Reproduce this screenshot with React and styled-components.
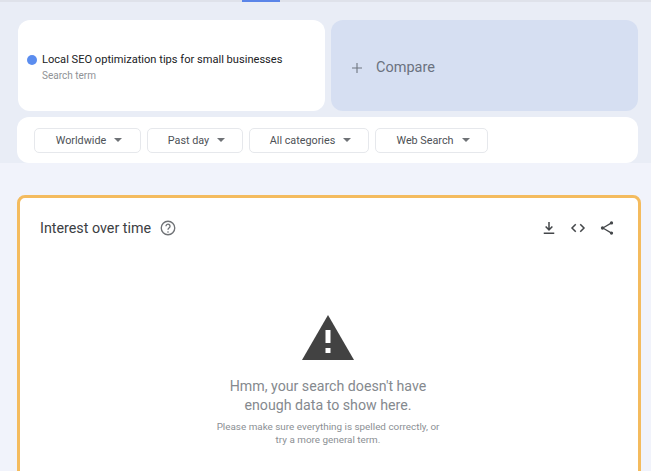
import React from 'react';
import styled, { createGlobalStyle } from 'styled-components';

const GlobalStyle = createGlobalStyle`
  html, body {
    margin: 0;
    padding: 0;
    height: 100%;
    overflow: hidden;
    background: #f1f3fb;
    font-family: Roboto, "Liberation Sans", sans-serif;
  }
`

const Page = styled.div`
  width: 651px;
  height: 471px;
  overflow: hidden;
`
const TopBar = styled.div`
  height: 2px;
  background: #dfe2ea;
  padding-left: 242px;
`
const ActiveTab = styled.div`
  width: 38px;
  height: 2px;
  background: #5b85e8;
`
const Header = styled.div`
  background: #e9edf6;
  height: 161px;
  padding: 18px 13px 0 17px;
  box-sizing: border-box;
  display: flex;
  flex-direction: column;
  gap: 6px;
`
const TermRow = styled.div`
  display: flex;
  gap: 6px;
  height: 91px;
`
const TermCard = styled.div`
  width: 307px;
  margin-left: 1px;
  background: #fff;
  border-radius: 12px;
  padding: 32px 0 0 9px;
  box-sizing: border-box;
`
const TermTitle = styled.div`
  display: flex;
  align-items: center;
  gap: 5px;
  font-size: 11.1px;
  line-height: 16px;
  color: #202124;
`
const Dot = styled.span`
  width: 10px;
  height: 10px;
  border-radius: 50%;
  background: #5b8def;
`
const TermSub = styled.div`
  margin: 1px 0 0 15px;
  font-size: 10px;
  line-height: 14px;
  color: #8f9296;
`
const CompareCard = styled.div`
  width: 307px;
  background: #d6dff2;
  border-radius: 12px;
  display: flex;
  align-items: center;
  padding: 4px 0 0 20px;
  box-sizing: border-box;
  gap: 13px;
  color: #6b7280;
  font-size: 14.5px;
`
const FilterBar = styled.div`
  background: #fff;
  border-radius: 12px;
  height: 46px;
  display: flex;
  align-items: center;
  gap: 6px;
  padding-left: 17px;
  box-sizing: border-box;
`
const Chip = styled.div`
  width: ${p => p.$width}px;
  height: 25px;
  box-sizing: border-box;
  border: 1px solid #e6e8ec;
  border-radius: 5px;
  padding-left: 3px;
  display: flex;
  align-items: center;
  justify-content: center;
  gap: 8px;
  font-size: 10.8px;
  color: #4d5156;
`
const Caret = styled.span`
  width: 0;
  height: 0;
  border-left: 4px solid transparent;
  border-right: 4px solid transparent;
  border-top: 4px solid #6f7276;
`
const Body = styled.div`
  padding: 32px 10px 0 17px;
`
const Card = styled.div`
  height: 320px;
  background: #fff;
  border: 3px solid #f4bb5e;
  border-radius: 8px;
  box-sizing: border-box;
  padding: 0 22px 0 20px;
`
const CardHead = styled.div`
  display: flex;
  align-items: center;
  height: 60px;
`
const CardTitle = styled.div`
  font-size: 14.3px;
  color: #3c4043;
`
const HelpIcon = styled.svg`
  width: 18px;
  height: 18px;
  margin-left: 8px;
`
const CardActions = styled.div`
  margin-left: auto;
  display: flex;
  align-items: center;
  gap: 11px;
`
const ActionIcon = styled.svg`
  width: 18px;
  height: 18px;
  display: block;
`
const EmptyState = styled.div`
  display: flex;
  flex-direction: column;
  align-items: center;
  padding-top: 57px;
`
const WarnIcon = styled.svg`
  width: 52px;
  height: 45px;
  display: block;
`
const EmptyTitle = styled.div`
  margin-top: 17px;
  width: 240px;
  text-align: center;
  font-size: 14.2px;
  line-height: 19px;
  color: #85898e;
`
const EmptyNote = styled.div`
  margin-top: 5px;
  width: 232px;
  text-align: center;
  font-size: 9.9px;
  line-height: 13px;
  color: #8b8f94;
`

const filters = [
  { label: 'Worldwide', width: 107 },
  { label: 'Past day', width: 96 },
  { label: 'All categories', width: 120 },
  { label: 'Web Search', width: 113 },
]

function App() {
  return (
    <Page>
      <GlobalStyle />
      <TopBar><ActiveTab /></TopBar>
      <Header>
        <TermRow>
          <TermCard>
            <TermTitle><Dot />Local SEO optimization tips for small businesses</TermTitle>
            <TermSub>Search term</TermSub>
          </TermCard>
          <CompareCard>
            <svg width="12" height="12" viewBox="0 0 12 12">
              <path d="M6 1v10M1 6h10" stroke="#6f7680" strokeWidth="1.1" fill="none" />
            </svg>
            Compare
          </CompareCard>
        </TermRow>
        <FilterBar>
          {filters.map(f => (
            <Chip key={f.label} $width={f.width}>{f.label}<Caret /></Chip>
          ))}
        </FilterBar>
      </Header>
      <Body>
        <Card>
          <CardHead>
            <CardTitle>Interest over time</CardTitle>
            <HelpIcon viewBox="0 0 24 24">
              <circle cx="12" cy="12" r="9" fill="none" stroke="#6f7276" strokeWidth="1.8" />
              <path d="M9.3 9.6a2.7 2.7 0 1 1 4.4 2.1c-1 .8-1.7 1.3-1.7 2.7" fill="none" stroke="#6f7276" strokeWidth="1.8" />
              <circle cx="12" cy="17.3" r="1.1" fill="#6f7276" />
            </HelpIcon>
            <CardActions>
              <ActionIcon viewBox="0 0 24 24">
                <path d="M12 4v10M7.500 10l4.500 4.500 4.500-4.500M5 19h14" fill="none" stroke="#44474a" strokeWidth="2" />
              </ActionIcon>
              <ActionIcon viewBox="0 0 24 24">
                <path d="M9 7l-5 5 5 5M15 7l5 5-5 5" fill="none" stroke="#44474a" strokeWidth="2" />
              </ActionIcon>
              <ActionIcon viewBox="0 0 24 24">
                <path d="M17.500 5.500L6.500 12l11 6.500" fill="none" stroke="#44474a" strokeWidth="1.6" />
                <circle cx="18" cy="5.200" r="2.200" fill="#44474a" />
                <circle cx="6" cy="12" r="2.200" fill="#44474a" />
                <circle cx="18" cy="18.800" r="2.200" fill="#44474a" />
              </ActionIcon>
            </CardActions>
          </CardHead>
          <EmptyState>
            <WarnIcon viewBox="0 0 52 45">
              <path d="M26 0L52 45H0Z" fill="#424242" />
              <path d="M23.500 15h5v13h-5zM23.500 33h5v5h-5z" fill="#fff" />
            </WarnIcon>
            <EmptyTitle>Hmm, your search doesn't have enough data to show here.</EmptyTitle>
            <EmptyNote>Please make sure everything is spelled correctly, or try a more general term.</EmptyNote>
          </EmptyState>
        </Card>
      </Body>
    </Page>
  );
}

export default App;
